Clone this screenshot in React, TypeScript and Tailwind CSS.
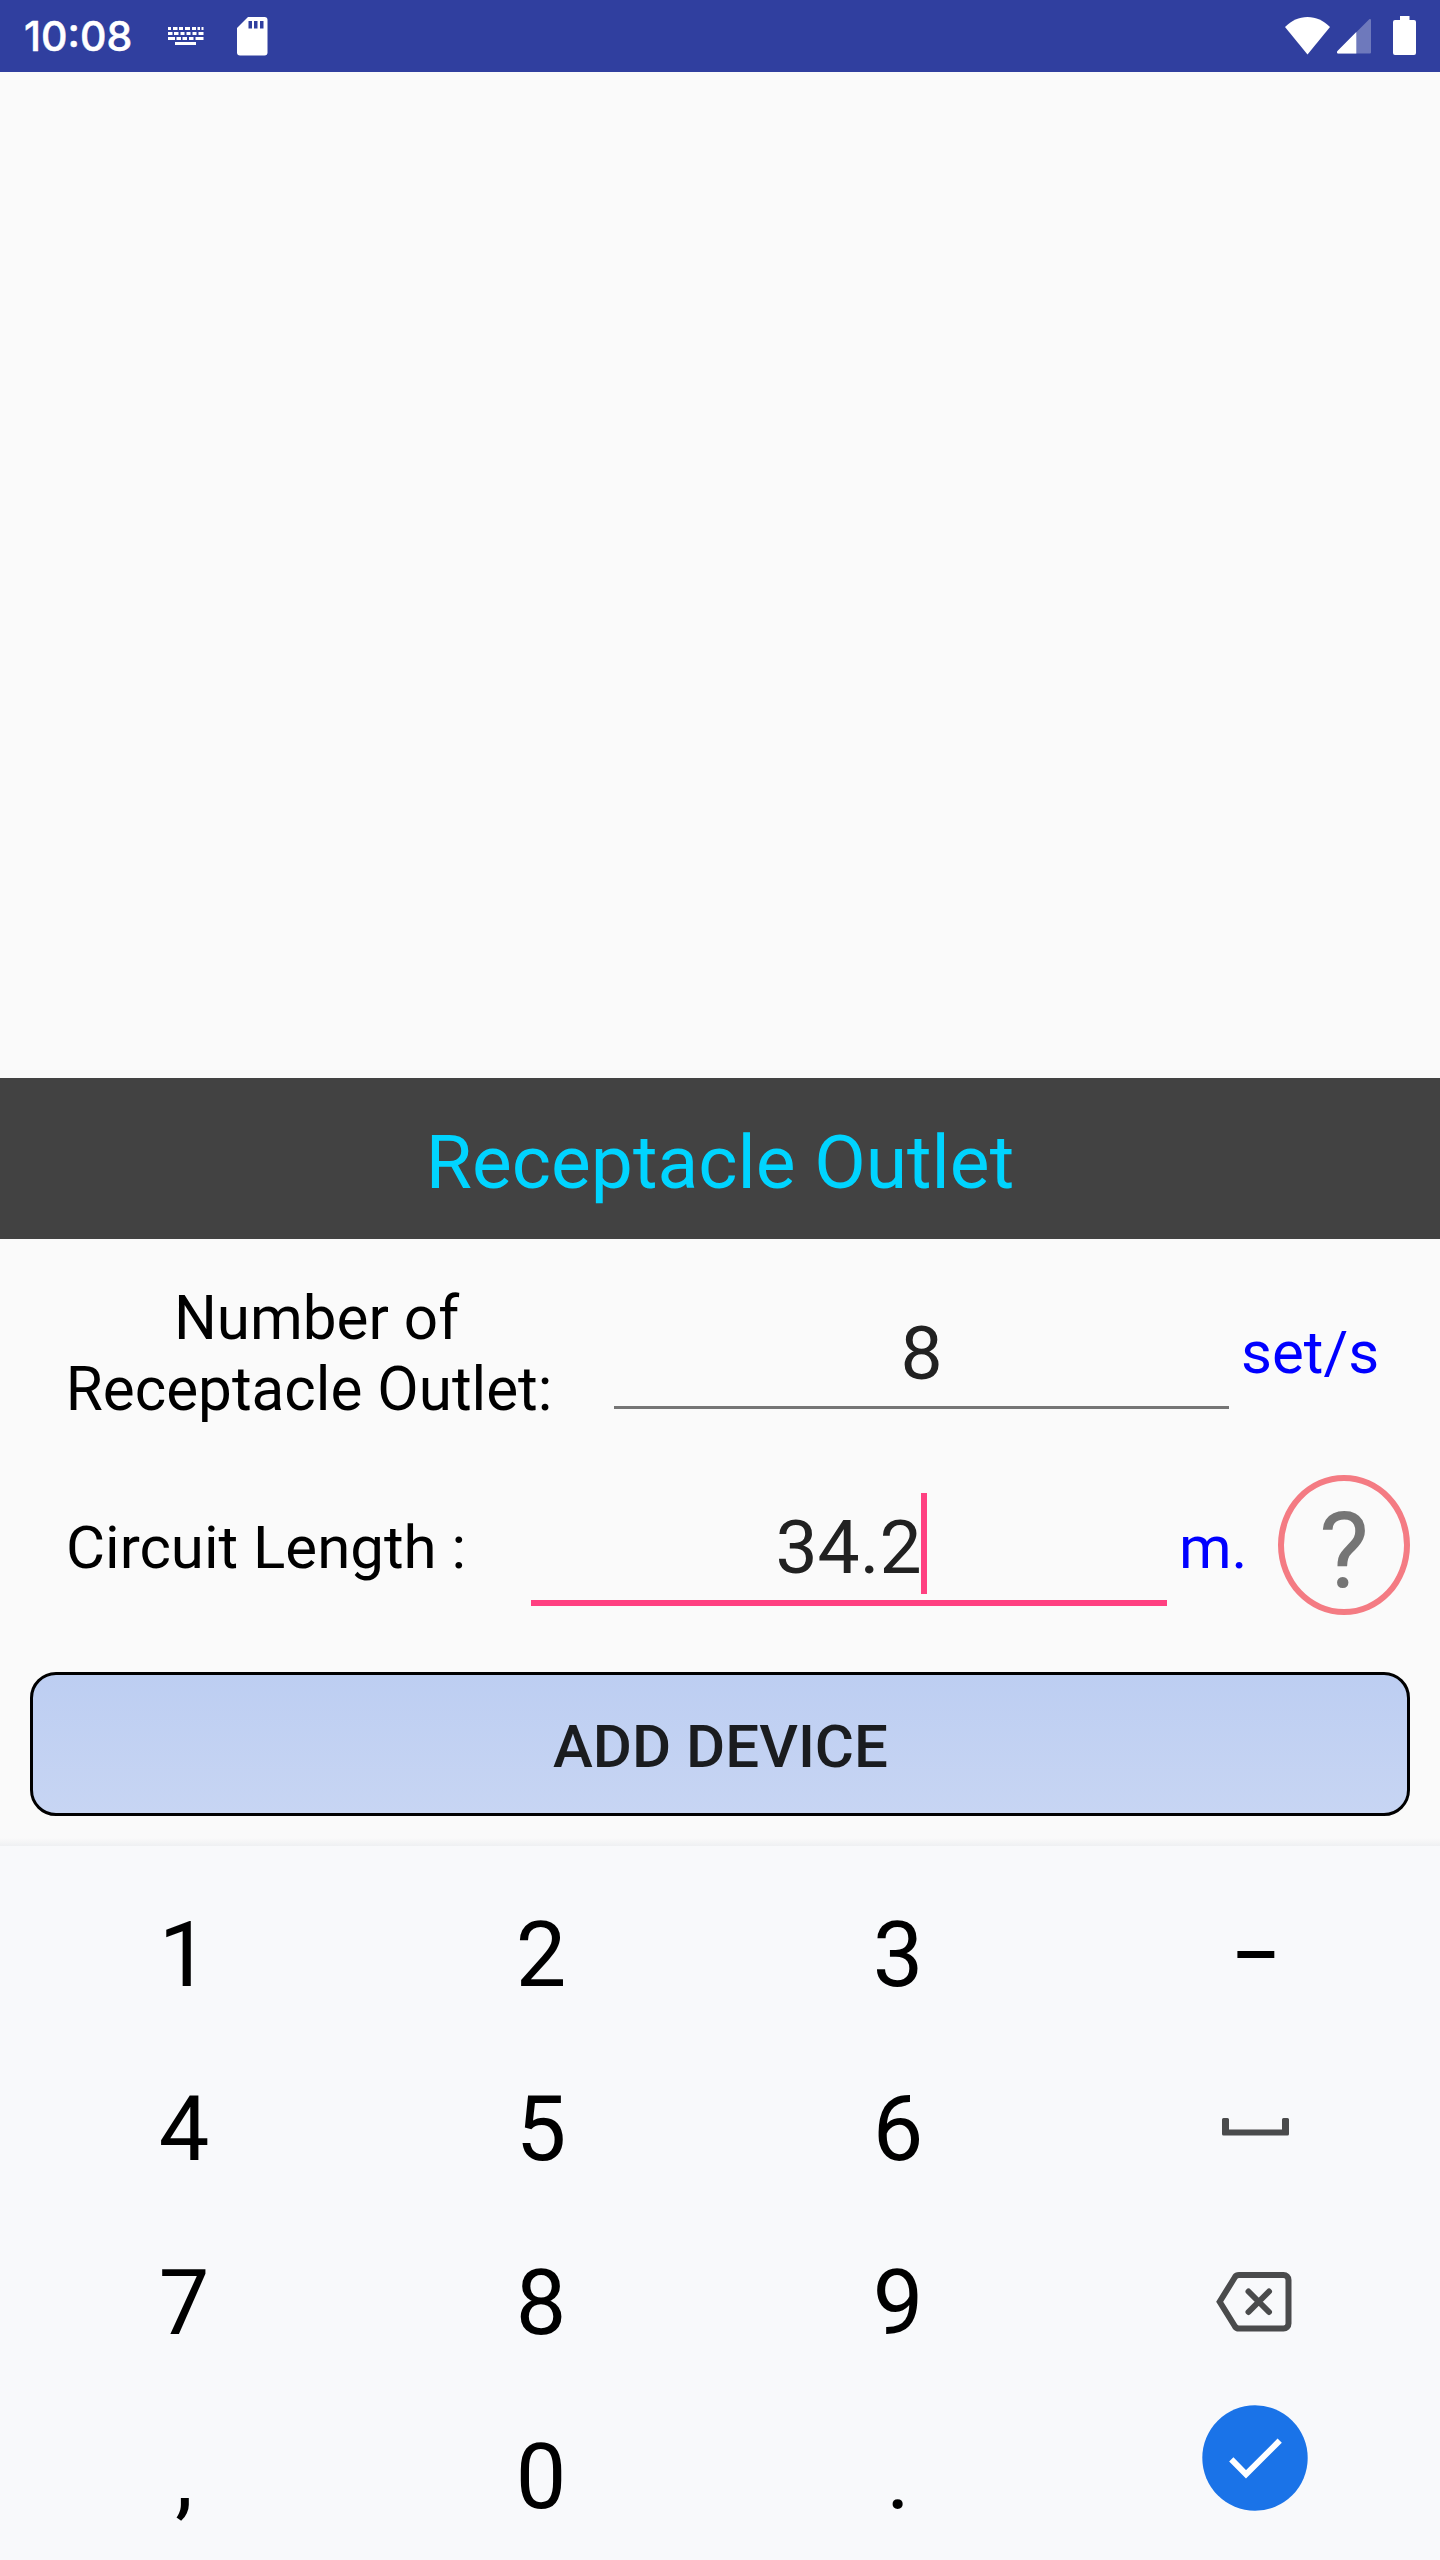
import React from "react";

const KeyboardIcon: React.FC = () => (
    <svg width="36" height="18" viewBox="0 0 36 18" fill="#fff">
        <path d="M0 0h3v3H0zM5 0h4.500v3H5zM11 0h4v3h-4zM17 0h5v3h-5zM24 0h4v3h-4zM29.500 0h2.500v3h-2.500zM33.500 0h2v3h-2z" />
        <path d="M0 5h4.500v3H0zM6 5h4.500v3H6zM12.500 5h4v3h-4zM18.500 5h4v3h-4zM24.500 5h4v3h-4zM30.500 5h5v3h-5z" />
        <path d="M0 10h7v3H0zM8.500 10h4.500v3H8.500zM14.500 10h4.500v3h-4.500zM21 10h4.500v3H21zM27.500 10h8v3h-8z" />
        <path d="M7 15h21v3H7z" />
    </svg>
);

const SdCardIcon: React.FC = () => (
    <svg width="31" height="39" viewBox="0 0 31 39">
        <path d="M11 0h16.500a3 3 0 0 1 3 3v32.500a3 3 0 0 1-3 3H3a3 3 0 0 1-3-3V11z" fill="#fff" />
        <path d="M11.500 4h3.500v7.500h-3.500zM17 4h3.500v7.500H17zM23 4h3.500v7.500H23z" fill="#303f9f" />
    </svg>
);

const WifiIcon: React.FC = () => (
    <svg width="45" height="38" viewBox="0 0 45 38" fill="#fff">
        <path d="M22.500 37.500 0 10C6.500 3.500 14 0 22.500 0S38.500 3.500 45 10z" />
    </svg>
);

const SignalIcon: React.FC = () => (
    <svg width="34" height="35" viewBox="0 0 34 35" fill="#fff">
        <path d="M32 .4c1-1 2-.4 2 1V33.500a1 1 0 0 1-1 1H1.500c-1.500 0-2-1.500-1-2.500z" opacity="0.3" />
        <path d="M19.300 13v21.500H1.500c-1.500 0-2-1.500-1-2.500z" />
    </svg>
);

const BatteryIcon: React.FC = () => (
    <svg width="23" height="39" viewBox="0 0 23 39" fill="#fff">
        <path d="M7 0h9.500v4H21a2 2 0 0 1 2 2v31a2 2 0 0 1-2 2H2a2 2 0 0 1-2-2V6a2 2 0 0 1 2-2h5z" />
    </svg>
);

const SpaceIcon: React.FC = () => (
    <svg width="67" height="18" viewBox="0 0 67 18" fill="#4a4b4c">
        <path d="M1.500 0H5.500A1.500 1.500 0 0 1 7 1.500V11.500H60V1.500A1.500 1.500 0 0 1 61.500 0H65.500A1.500 1.500 0 0 1 67 1.500V16A1.500 1.500 0 0 1 65.500 17.500H1.500A1.500 1.500 0 0 1 0 16V1.500A1.500 1.500 0 0 1 1.500 0z" />
    </svg>
);

const BackspaceIcon: React.FC = () => (
    <svg width="76" height="60" viewBox="0 0 76 60" fill="none" stroke="#4a4b4c" strokeWidth="6">
        <path d="M23 3H67.500A5 5 0 0 1 72.500 8V51.500A5 5 0 0 1 67.500 56.500H23C21.500 56.500 20 56 19 54.500L3.700 29.750 19 5C20 3.500 21.500 3 23 3z" />
        <path d="M32.500 19.500 53 40M53 19.500 32.500 40" strokeLinecap="round" />
    </svg>
);

const CheckIcon: React.FC = () => (
    <svg width="106" height="106" viewBox="0 0 106 106">
        <circle cx="53" cy="53" r="52.700" fill="#1a73e8" />
        <path d="M29.300 54.400 44 69.300 77.700 35.700" fill="none" stroke="#fff" strokeWidth="6" />
    </svg>
);

const keys = [
    ["1", "2", "3", "–"],
    ["4", "5", "6", "space"],
    ["7", "8", "9", "back"],
    [",", "0", ".", "done"],
];

function Key({ name }: { name: string }) {
    if (name === "space") {
        return <button className="flex items-start justify-center pt-[98px]"><SpaceIcon /></button>;
    }
    if (name === "back") {
        return <button className="flex items-start justify-center pt-[78px] pr-[3px]"><BackspaceIcon /></button>;
    }
    if (name === "done") {
        return <button className="flex items-start justify-center pt-[37px] pr-[2px]"><CheckIcon /></button>;
    }
    if (name === "–") {
        return (
            <button className="flex items-start justify-center pt-[57px] text-[74px] leading-[106px] font-medium text-black">
                {name}
            </button>
        );
    }
    return (
        <button className="flex items-start justify-center pt-[57px] pr-[1px] text-[90px] leading-[106px] text-black">
            {name}
        </button>
    );
}

function StatusBar() {
    return (
        <div className="flex h-[72px] items-start bg-[#303f9f] text-white">
            <div className="ml-[24px] mt-[12px] w-[144px] font-[Inter,sans-serif] text-[41px] leading-[49px] font-medium [-webkit-text-stroke:0.5px_white]">
                10:08
            </div>
            <div className="mt-[27px]"><KeyboardIcon /></div>
            <div className="ml-[33px] mt-[17px]"><SdCardIcon /></div>
            <div className="ml-auto mt-[17px]"><WifiIcon /></div>
            <div className="ml-[7px] mt-[19px]"><SignalIcon /></div>
            <div className="ml-[22px] mr-[24px] mt-[16px]"><BatteryIcon /></div>
        </div>
    );
}

export default function App() {
    return (
        <div className="flex h-[2560px] w-[1440px] flex-col overflow-hidden bg-[#fafafa] font-[Roboto,sans-serif]">
            <StatusBar />
            <div className="h-[1006px]" />

            <h1 className="h-[161px] bg-[#424242] pt-[40px] text-center text-[75px] leading-[88px] text-[#00d4ff]">
                Receptacle Outlet
            </h1>

            <div className="flex h-[215px] items-start">
                <div className="ml-[65px] w-[549px] pt-[44px] text-[60.2px] leading-[71px] text-black">
                    <p className="w-[503px] text-center whitespace-nowrap">
                        Number of<br />Receptacle Outlet:&nbsp;
                    </p>
                </div>
                <div className="h-[170px] w-[615px] border-b-[3px] border-[#757575] pt-[70px] text-center text-[75px] leading-[88px] text-[#212121]">
                    8
                </div>
                <div className="ml-[12px] pt-[78px] text-[60px] leading-[71px] text-[#0000ff]">set/s</div>
            </div>

            <div className="flex h-[218px] items-start">
                <div className="ml-[66px] w-[465px] pt-[58px] text-[60px] leading-[71px] text-black">
                    Circuit Length :
                </div>
                <div className="flex h-[152px] w-[636px] justify-center border-b-[6px] border-[#ff4081] text-[75px] leading-[88px] text-[#212121]">
                    <span className="pt-[49px]">34.2</span>
                    <span className="-mr-[4px] -ml-[1px] mt-[39px] h-[101px] w-[6px] bg-[#ff4081]" />
                </div>
                <div className="ml-[12px] w-[99px] pt-[58px] text-[60px] leading-[71px] text-[#0000ff]">m.</div>
                <button className="mt-[21px] flex h-[140px] w-[132px] items-start justify-center rounded-[50%] border-[6px] border-[#f47b83] pt-[8px] text-[106px] leading-[124px] text-[#757575]">
                    ?
                </button>
            </div>

            <button className="mx-[30px] h-[144px] rounded-[26px] border-[3px] border-black bg-linear-to-b from-[#bdcef2] to-[#c7d5f3] pt-[5px] pl-[1px] text-[60px] leading-[71px] font-medium text-[#1a1c1f]">
                ADD DEVICE
            </button>

            <div className="mt-[22px] h-[8px] bg-linear-to-b from-[#fafafa] to-[#eef0f2]" />
            <div className="grid flex-1 grid-cols-[repeat(4,357px)] grid-rows-[174px_174px_174px_174px] bg-[#f8f9fb] pl-[6px]">
                {keys.flat().map((k) => (
                    <Key key={k} name={k} />
                ))}
            </div>
        </div>
    );
}
